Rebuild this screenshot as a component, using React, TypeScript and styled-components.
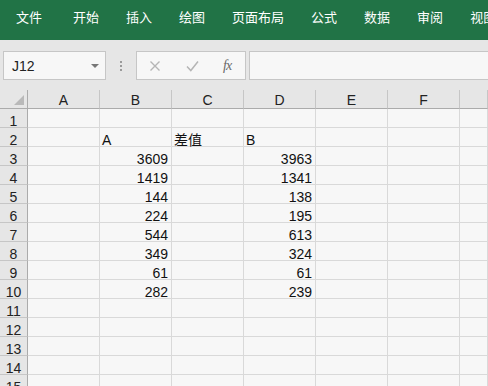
import React from "react";
import styled, { createGlobalStyle } from "styled-components";

const Global = createGlobalStyle`
  html, body { margin: 0; padding: 0; background: #e8e8e8; overflow: hidden; }
  body { width: 488px; height: 386px; font-family: "Liberation Sans", "Noto Sans CJK SC", sans-serif; }
  #root { width: 488px; height: 386px; overflow: hidden; }
`;

const Page = styled.div`
  display: flex;
  flex-direction: column;
  width: 488px;
  height: 386px;
  overflow: hidden;
`;

const Ribbon = styled.div`
  height: 40px;
  flex: none;
  background: #217346;
  display: flex;
  align-items: center;
  gap: 27px;
  padding: 0 0 6px 16px;
  box-sizing: border-box;
  white-space: nowrap;
  overflow: hidden;
`;

const Tab = styled.span<{ $extra?: number }>`
  color: #ffffff;
  font-family: "Noto Sans CJK SC", sans-serif;
  font-size: 13px;
  line-height: 16px;
  margin-right: ${(p) => p.$extra ?? 0}px;
`;

const Toolbar = styled.div`
  height: 50px;
  flex: none;
  background: #e6e6e6;
  display: flex;
  align-items: flex-start;
  padding: 11px 0 0 3px;
  box-sizing: border-box;
`;

const Box = styled.div<{ $w?: number }>`
  height: 29px;
  box-sizing: border-box;
  background: #f7f7f7;
  border: 1px solid #c6c6c6;
  display: flex;
  align-items: center;
  ${(p) => (p.$w ? `width: ${p.$w}px; flex: none;` : `flex: 1; margin-right: -4px;`)}
`;

const NameText = styled.span`
  flex: 1;
  padding-left: 8px;
  font-size: 14px;
  color: #222;
`;

const Caret = styled.span`
  width: 0;
  height: 0;
  border-left: 4px solid transparent;
  border-right: 4px solid transparent;
  border-top: 4px solid #777;
  margin-right: 6px;
`;

const Dots = styled.div`
  width: 30px;
  height: 29px;
  flex: none;
  display: flex;
  flex-direction: column;
  align-items: center;
  justify-content: center;
  gap: 2px;
  & > i {
    width: 2px;
    height: 2px;
    background: #9a9a9a;
    display: block;
  }
`;

const FxBox = styled(Box)`
  margin-right: 3px;
  padding-left: 12px;
  gap: 25px;
`;

const Fx = styled.span`
  font-family: "Liberation Serif", serif;
  font-style: italic;
  font-size: 14px;
  color: #6a6a6a;
  letter-spacing: -1px;
  margin-left: -1px;
`;

const Sheet = styled.div`
  display: grid;
  grid-template-columns: 28px repeat(6, 72px) 1fr;
  grid-auto-rows: 19px;
  background: #f7f7f7;
`;

const ColHead = styled.div`
  background: #e6e6e6;
  border-right: 1px solid #c6c6c6;
  border-bottom: 1px solid #ababab;
  box-sizing: border-box;
  text-align: center;
  font-size: 14px;
  line-height: 14px;
  padding-top: 3px;
  color: #222;
`;

const Corner = styled(ColHead)`
  position: relative;
  border-right: 1px solid #ababab;
  &::after {
    content: "";
    position: absolute;
    right: 3px;
    bottom: 3px;
    width: 0;
    height: 0;
    border-left: 10px solid transparent;
    border-bottom: 10px solid #b9b9b9;
  }
`;

const RowHead = styled.div`
  background: #e6e6e6;
  border-right: 1px solid #ababab;
  border-bottom: 1px solid #c6c6c6;
  box-sizing: border-box;
  text-align: center;
  font-size: 14px;
  line-height: 14px;
  padding-top: 5px;
  color: #222;
  white-space: nowrap;
`;

const Cell = styled.div<{ $right?: boolean }>`
  border-right: 1px solid #d9d9d9;
  border-bottom: 1px solid #d9d9d9;
  box-sizing: border-box;
  font-size: 14px;
  line-height: 14px;
  padding: 5px 3px 0 2px;
  text-align: ${(p) => (p.$right ? "right" : "left")};
  color: #111;
  white-space: nowrap;
`;

const tabs = ["文件", "开始", "插入", "绘图", "页面布局", "公式", "数据", "审阅", "视图"];
const cols = ["A", "B", "C", "D", "E", "F", ""];

const data: Record<number, string[]> = {
  2: ["", "A", "差值", "B", "", "", ""],
  3: ["", "3609", "", "3963", "", "", ""],
  4: ["", "1419", "", "1341", "", "", ""],
  5: ["", "144", "", "138", "", "", ""],
  6: ["", "224", "", "195", "", "", ""],
  7: ["", "544", "", "613", "", "", ""],
  8: ["", "349", "", "324", "", "", ""],
  9: ["", "61", "", "61", "", "", ""],
  10: ["", "282", "", "239", "", "", ""],
};

const isNum = (s: string) => /^\d+$/.test(s);

export default function App() {
  const rows = Array.from({ length: 15 }, (_, i) => i + 1);
  return (
    <Page>
      <Global />
      <Ribbon>
        {tabs.map((t, i) => (
          <Tab key={t} $extra={i === 0 ? 4 : 0}>
            {t}
          </Tab>
        ))}
      </Ribbon>
      <Toolbar>
        <Box $w={103}>
          <NameText>J12</NameText>
          <Caret />
        </Box>
        <Dots>
          <i />
          <i />
          <i />
        </Dots>
        <FxBox $w={110}>
          <svg width="12" height="12" viewBox="0 0 12 12">
            <path d="M1.5 1.5 L10.5 10.5 M10.5 1.5 L1.5 10.5" stroke="#b5b5b5" strokeWidth="1.4" fill="none" />
          </svg>
          <svg width="13" height="12" viewBox="0 0 13 12">
            <path d="M1 6.5 L4.8 10.5 L12 1.5" stroke="#b5b5b5" strokeWidth="1.5" fill="none" />
          </svg>
          <Fx>fx</Fx>
        </FxBox>
        <Box />
      </Toolbar>
      <Sheet>
        <Corner />
        {cols.map((c, i) => (
          <ColHead key={"h" + i}>{c}</ColHead>
        ))}
        {rows.map((r) => (
          <React.Fragment key={r}>
            <RowHead>{r}</RowHead>
            {(data[r] ?? ["", "", "", "", "", "", ""]).map((v, ci) => (
              <Cell key={ci} $right={isNum(v)}>
                {v}
              </Cell>
            ))}
          </React.Fragment>
        ))}
      </Sheet>
    </Page>
  );
}
